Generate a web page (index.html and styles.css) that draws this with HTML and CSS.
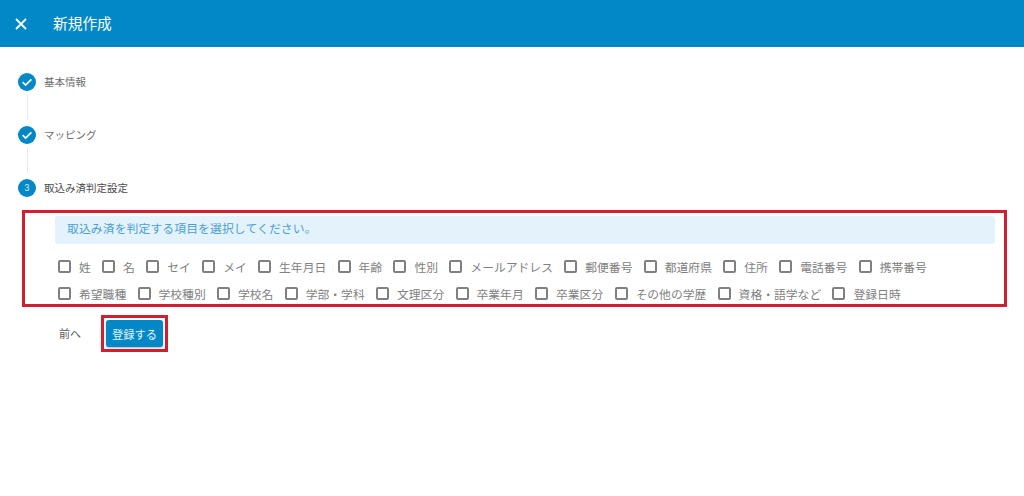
FILE: index.html
```
<!DOCTYPE html>
<html lang="ja">
<head>
<meta charset="utf-8">
<title>新規作成</title>
<link rel="stylesheet" href="styles.css">
</head>
<body>
<header class="header">
  <svg class="close" viewBox="0 0 12 12" width="12" height="12"><path d="M1 1L11 11M11 1L1 11" fill="none" stroke="#fff" stroke-width="1.8"/></svg>
  <h1 class="title">新規作成</h1>
</header>
<main class="main">
  <div class="step">
    <span class="dot"><svg viewBox="0 0 18 18" width="18" height="18"><path d="M4.6 9.2L7.6 12.1L13.4 6.3" fill="none" stroke="#fff" stroke-width="1.7"/></svg></span>
    <span class="step-label">基本情報</span>
  </div>
  <div class="connector"></div>
  <div class="step">
    <span class="dot"><svg viewBox="0 0 18 18" width="18" height="18"><path d="M4.6 9.2L7.6 12.1L13.4 6.3" fill="none" stroke="#fff" stroke-width="1.7"/></svg></span>
    <span class="step-label">マッピング</span>
  </div>
  <div class="connector"></div>
  <div class="step">
    <span class="dot dot-num">3</span>
    <span class="step-label step-active">取込み済判定設定</span>
  </div>
  <section class="highlight">
    <div class="alert">取込み済を判定する項目を選択してください。</div>
    <div class="row row-one">
      <label class="check"><span class="box"></span>姓</label>
      <label class="check"><span class="box"></span>名</label>
      <label class="check"><span class="box"></span>セイ</label>
      <label class="check"><span class="box"></span>メイ</label>
      <label class="check"><span class="box"></span>生年月日</label>
      <label class="check"><span class="box"></span>年齢</label>
      <label class="check"><span class="box"></span>性別</label>
      <label class="check"><span class="box"></span>メールアドレス</label>
      <label class="check"><span class="box"></span>郵便番号</label>
      <label class="check"><span class="box"></span>都道府県</label>
      <label class="check"><span class="box"></span>住所</label>
      <label class="check"><span class="box"></span>電話番号</label>
      <label class="check"><span class="box"></span>携帯番号</label>
    </div>
    <div class="row">
      <label class="check"><span class="box"></span>希望職種</label>
      <label class="check"><span class="box"></span>学校種別</label>
      <label class="check"><span class="box"></span>学校名</label>
      <label class="check"><span class="box"></span>学部・学科</label>
      <label class="check"><span class="box"></span>文理区分</label>
      <label class="check"><span class="box"></span>卒業年月</label>
      <label class="check"><span class="box"></span>卒業区分</label>
      <label class="check"><span class="box"></span>その他の学歴</label>
      <label class="check"><span class="box"></span>資格・語学など</label>
      <label class="check"><span class="box"></span>登録日時</label>
    </div>
  </section>
  <div class="actions">
    <span class="prev">前へ</span>
    <span class="btn-frame"><button class="btn" type="button">登録する</button></span>
  </div>
</main>
</body>
</html>
```
FILE: styles.css
```
* { box-sizing: border-box; }
html, body { margin: 0; padding: 0; }
body {
  width: 1024px;
  height: 496px;
  overflow: hidden;
  background: #fff;
  font-family: Roboto, "Noto Sans CJK JP", sans-serif;
  color: #666;
}
.header {
  height: 47px;
  background: #0288c6;
  display: flex;
  align-items: center;
  padding-left: 15px;
}
.close { display: block; }
.title {
  margin: 0 0 2px 26px;
  font-size: 14.7px;
  font-weight: 400;
  color: #fff;
}
.main { padding: 26px 18px 0 18px; }
.step {
  display: flex;
  align-items: center;
  height: 18px;
  gap: 8px;
}
.dot {
  width: 18px;
  height: 18px;
  border-radius: 50%;
  background: #0288c6;
  flex: none;
  display: flex;
  align-items: center;
  justify-content: center;
  color: #dff0f8;
  font-size: 9px;
}
.dot svg { display: block; }
.step-label { font-size: 10.5px; color: #6e6e6e; padding-bottom: 2px; }
.step-active { color: #4a4a4a; }
.connector {
  width: 1px;
  height: 35px;
  margin-left: 9px;
  padding: 0;
  background: linear-gradient(#fff 0 4px, #e8e8e8 4px 29px, #fff 29px);
}
.highlight {
  margin: 13px 0 0 4px;
  width: 985px;
  height: 97px;
  border: 3px solid #d11f2f;
  padding: 3px 9px 0 30px;
}
.alert {
  height: 28px;
  background: #e3f2fb;
  border-radius: 3px;
  color: #4a9fd4;
  font-size: 11.8px;
  line-height: 27px;
  padding-left: 12px;
  letter-spacing: 0.12px;
}
.row {
  display: flex;
  gap: 11.3px;
  padding-left: 3px;
  margin-top: 13px;
  height: 14px;
}
.row-one { margin-top: 15px; }
.check {
  display: flex;
  align-items: center;
  gap: 8px;
  font-size: 11.8px;
  color: #808080;
  white-space: nowrap;
}
.box {
  width: 13px;
  height: 13px;
  border: 2px solid #808080;
  border-radius: 2px;
  flex: none;
}
.actions {
  display: flex;
  align-items: center;
  margin-top: 8px;
  padding-left: 41px;
}
.prev { font-size: 11px; color: #5a5a5a; width: 42px; padding-bottom: 2px; }
.btn-frame {
  display: block;
  border: 3px solid #d11f2f;
  padding: 2px;
  height: 37px;
  width: 67px;
}
.btn {
  display: block;
  width: 100%;
  height: 27px;
  border: 0;
  border-radius: 3px;
  background: #0288c6;
  color: #e6f4fb;
  font-family: inherit;
  font-size: 11.3px;
  padding: 0;
  box-shadow: 0 1px 2px rgba(0,0,0,.3);
}
```
